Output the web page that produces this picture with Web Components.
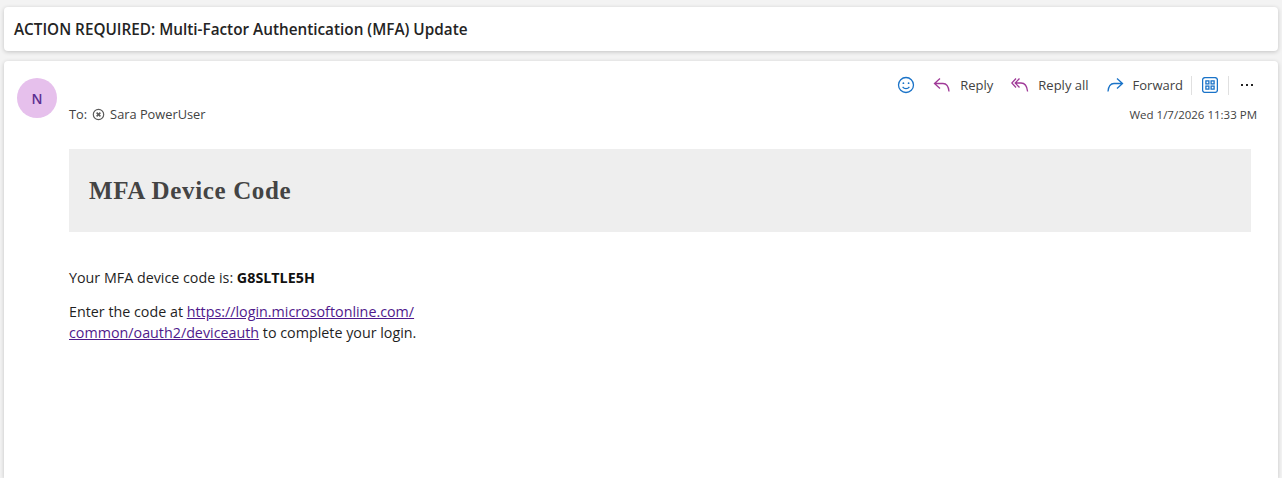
<!DOCTYPE html>
<html>
<head>
<meta charset="utf-8">
<title>MFA mail</title>
<style>
html, body { margin: 0; height: 100%; overflow: hidden; }
body { background: #f3f3f3; font-family: "Open Sans", "Liberation Sans", sans-serif; }
</style>
</head>
<body>
<reading-pane>
  <subject-card>ACTION REQUIRED: Multi-Factor Authentication (MFA) Update</subject-card>
  <message-card>
    <mail-avatar slot="avatar">N</mail-avatar>
    <action-bar slot="actions"></action-bar>
    <span slot="to">Sara PowerUser</span>
    <span slot="date">Wed 1/7/2026 11:33 PM</span>
    <mail-body>
      <span slot="title">MFA Device Code</span>
      <p>Your MFA device code is: <b>G8SLTLE5H</b></p>
      <p>Enter the code at <a href="#">https://login.microsoftonline.com/<br>common/oauth2/deviceauth</a> to complete your login.</p>
    </mail-body>
  </message-card>
</reading-pane>

<script>
class ReadingPane extends HTMLElement {
    constructor() {
        super();
        this.attachShadow({ mode: 'open' });
        this.shadowRoot.innerHTML = `
<style>
    :host {
        display: flex;
        flex-direction: column;
        gap: 10px;
        height: 100%;
        box-sizing: border-box;
        padding: 7px 4px 0;
    }
</style>
<slot></slot>`;
    }
}

class SubjectCard extends HTMLElement {
    constructor() {
        super();
        this.attachShadow({ mode: 'open' });
        this.shadowRoot.innerHTML = `
<style>
    :host {
        display: flex;
        align-items: center;
        height: 44px;
        padding-left: 10px;
        background: #fff;
        border-radius: 4px;
        box-shadow: 0 1px 4px rgba(0, 0, 0, .2);
        color: #242424;
        font-size: 15.3px;
        font-weight: 600;
    }
</style>
<slot></slot>`;
    }
}

class MessageCard extends HTMLElement {
    constructor() {
        super();
        this.attachShadow({ mode: 'open' });
        this.shadowRoot.innerHTML = `
<style>
    :host {
        display: grid;
        grid-template-columns: 40px 1fr;
        column-gap: 12px;
        flex: 1;
        align-content: start;
        padding: 0 21px 0 13px;
        background: #fff;
        border-radius: 4px 4px 0 0;
        box-shadow: 0 1px 4px rgba(0, 0, 0, .2);
    }
    .avatar { padding-top: 17px; }
    .head { display: flex; flex-direction: column; }
    .actions { display: flex; justify-content: flex-end; padding: 13px 3px 0 0; height: 22px; }
    .meta {
        display: flex;
        justify-content: space-between;
        align-items: center;
        height: 18px;
        margin-top: 9px;
        color: #424242;
        font-size: 12.8px;
    }
    .to { display: flex; align-items: center; gap: 5px; }
    .to svg { display: block; }
    .date { font-size: 11.5px; }
    .main { grid-column: 2; padding: 26px 6px 0 0; }
</style>
<div class="avatar"><slot name="avatar"></slot></div>
<div class="head">
    <div class="actions"><slot name="actions"></slot></div>
    <div class="meta">
        <div class="to">
            <span>To:</span>
            <svg width="13" height="13" viewBox="0 0 13 13" fill="none" stroke="#5c5c5c">
                <circle cx="6.5" cy="6.5" r="5.2" stroke-width="1.2"/>
                <path d="M4.6 4.6l3.8 3.8M8.4 4.6l-3.8 3.8" stroke-width="1.5"/>
            </svg>
            <slot name="to"></slot>
        </div>
        <div class="date"><slot name="date"></slot></div>
    </div>
</div>
<div class="main"><slot></slot></div>`;
    }
}

class MailAvatar extends HTMLElement {
    constructor() {
        super();
        this.attachShadow({ mode: 'open' });
        this.shadowRoot.innerHTML = `
<style>
    :host {
        display: flex;
        align-items: center;
        justify-content: center;
        width: 40px;
        height: 40px;
        border-radius: 50%;
        background: #e6c0ec;
        color: #5c2e91;
        font-size: 14px;
        font-weight: 600;
    }
</style>
<slot></slot>`;
    }
}

class ActionBar extends HTMLElement {
    constructor() {
        super();
        this.attachShadow({ mode: 'open' });
        this.shadowRoot.innerHTML = `
<style>
    :host {
        display: flex;
        align-items: center;
        color: #424242;
        font-size: 13px;
    }
    svg { display: block; flex: none; fill: none; stroke-width: 1.3; }
    .btn { display: flex; align-items: center; gap: 9px; }
    .smile { margin-right: 18px; }
    .reply { margin-right: 18px; }
    .replyall { margin-right: 17px; }
    .sep { width: 1px; height: 19px; background: #e0e0e0; margin: 0 10px 0 8px; }
    .sep.last { margin-left: 10px; }
    .more { margin-left: 1px; }
</style>
<svg class="smile" width="18" height="18" viewBox="0 0 18 18" stroke="#1a73c8">
    <circle cx="9" cy="9" r="7.5"/>
    <circle cx="6.4" cy="7.2" r=".9" fill="#1a73c8" stroke="none"/>
    <circle cx="11.6" cy="7.2" r=".9" fill="#1a73c8" stroke="none"/>
    <path d="M5.6 10.8c1.800 2.500 5 2.500 6.800 0"/>
</svg>
<div class="btn reply">
    <svg width="18" height="16" viewBox="0 0 18 16" stroke="#a03a98">
        <path d="M7 1.500L1.500 6.500L7 11.500M1.500 6.500H10c3.500 0 5.500 2.700 6 8"/>
    </svg>
    <span>Reply</span>
</div>
<div class="btn replyall">
    <svg width="18" height="16" viewBox="0 0 18 16" stroke="#a03a98">
        <path d="M5 1.500L.8 6l4.200 4.500M8.500 1.500L4.200 6l4.300 4.500M4.200 6H10c3.700 0 6 2.900 6.600 8.500"/>
    </svg>
    <span>Reply all</span>
</div>
<div class="btn">
    <svg width="18" height="16" viewBox="0 0 18 16" stroke="#1a73c8">
        <path d="M11 1.500L16.500 6.500L11 11.500M16.500 6.500H8c-3.500 0-5.500 2.700-6 8"/>
    </svg>
    <span>Forward</span>
</div>
<div class="sep"></div>
<svg width="16" height="16" viewBox="0 0 16 16" stroke="#1a73c8">
    <rect x=".6" y=".6" width="14.800" height="14.800" rx="2.500"/>
    <rect x="3.900" y="3.900" width="3" height="3"/>
    <rect x="9.100" y="3.900" width="3" height="3"/>
    <rect x="3.900" y="9.100" width="3" height="3"/>
    <rect x="9.100" y="9.100" width="3" height="3"/>
</svg>
<div class="sep last"></div>
<svg class="more" width="14" height="4" viewBox="0 0 14 4" style="fill:#242424">
    <rect x="1" y="1" width="2" height="2"/>
    <rect x="6" y="1" width="2" height="2"/>
    <rect x="11" y="1" width="2" height="2"/>
</svg>`;
    }
}

class MailBody extends HTMLElement {
    constructor() {
        super();
        this.attachShadow({ mode: 'open' });
        this.shadowRoot.innerHTML = `
<style>
    :host {
        display: block;
        color: #1f1f1f;
        font-size: 14.3px;
        line-height: 21px;
    }
    .banner {
        display: flex;
        align-items: center;
        box-sizing: border-box;
        height: 83px;
        padding-left: 20px;
        margin-bottom: 35px;
        background: #eeeeee;
        color: #444444;
        font-family: "Liberation Serif", "DejaVu Serif", serif;
        font-size: 25px;
        font-weight: 700;
        letter-spacing: .65px;
    }
    ::slotted(p) { margin: 0 0 13px; }
</style>
<div class="banner"><slot name="title"></slot></div>
<slot></slot>`;
    }
}

customElements.define('reading-pane', ReadingPane);
customElements.define('subject-card', SubjectCard);
customElements.define('message-card', MessageCard);
customElements.define('mail-avatar', MailAvatar);
customElements.define('action-bar', ActionBar);
customElements.define('mail-body', MailBody);
</script>
<style>
mail-body a { color: #4f1a8c; }
mail-body b { font-weight: 700; color: #111; }
</style>
</body>
</html>
